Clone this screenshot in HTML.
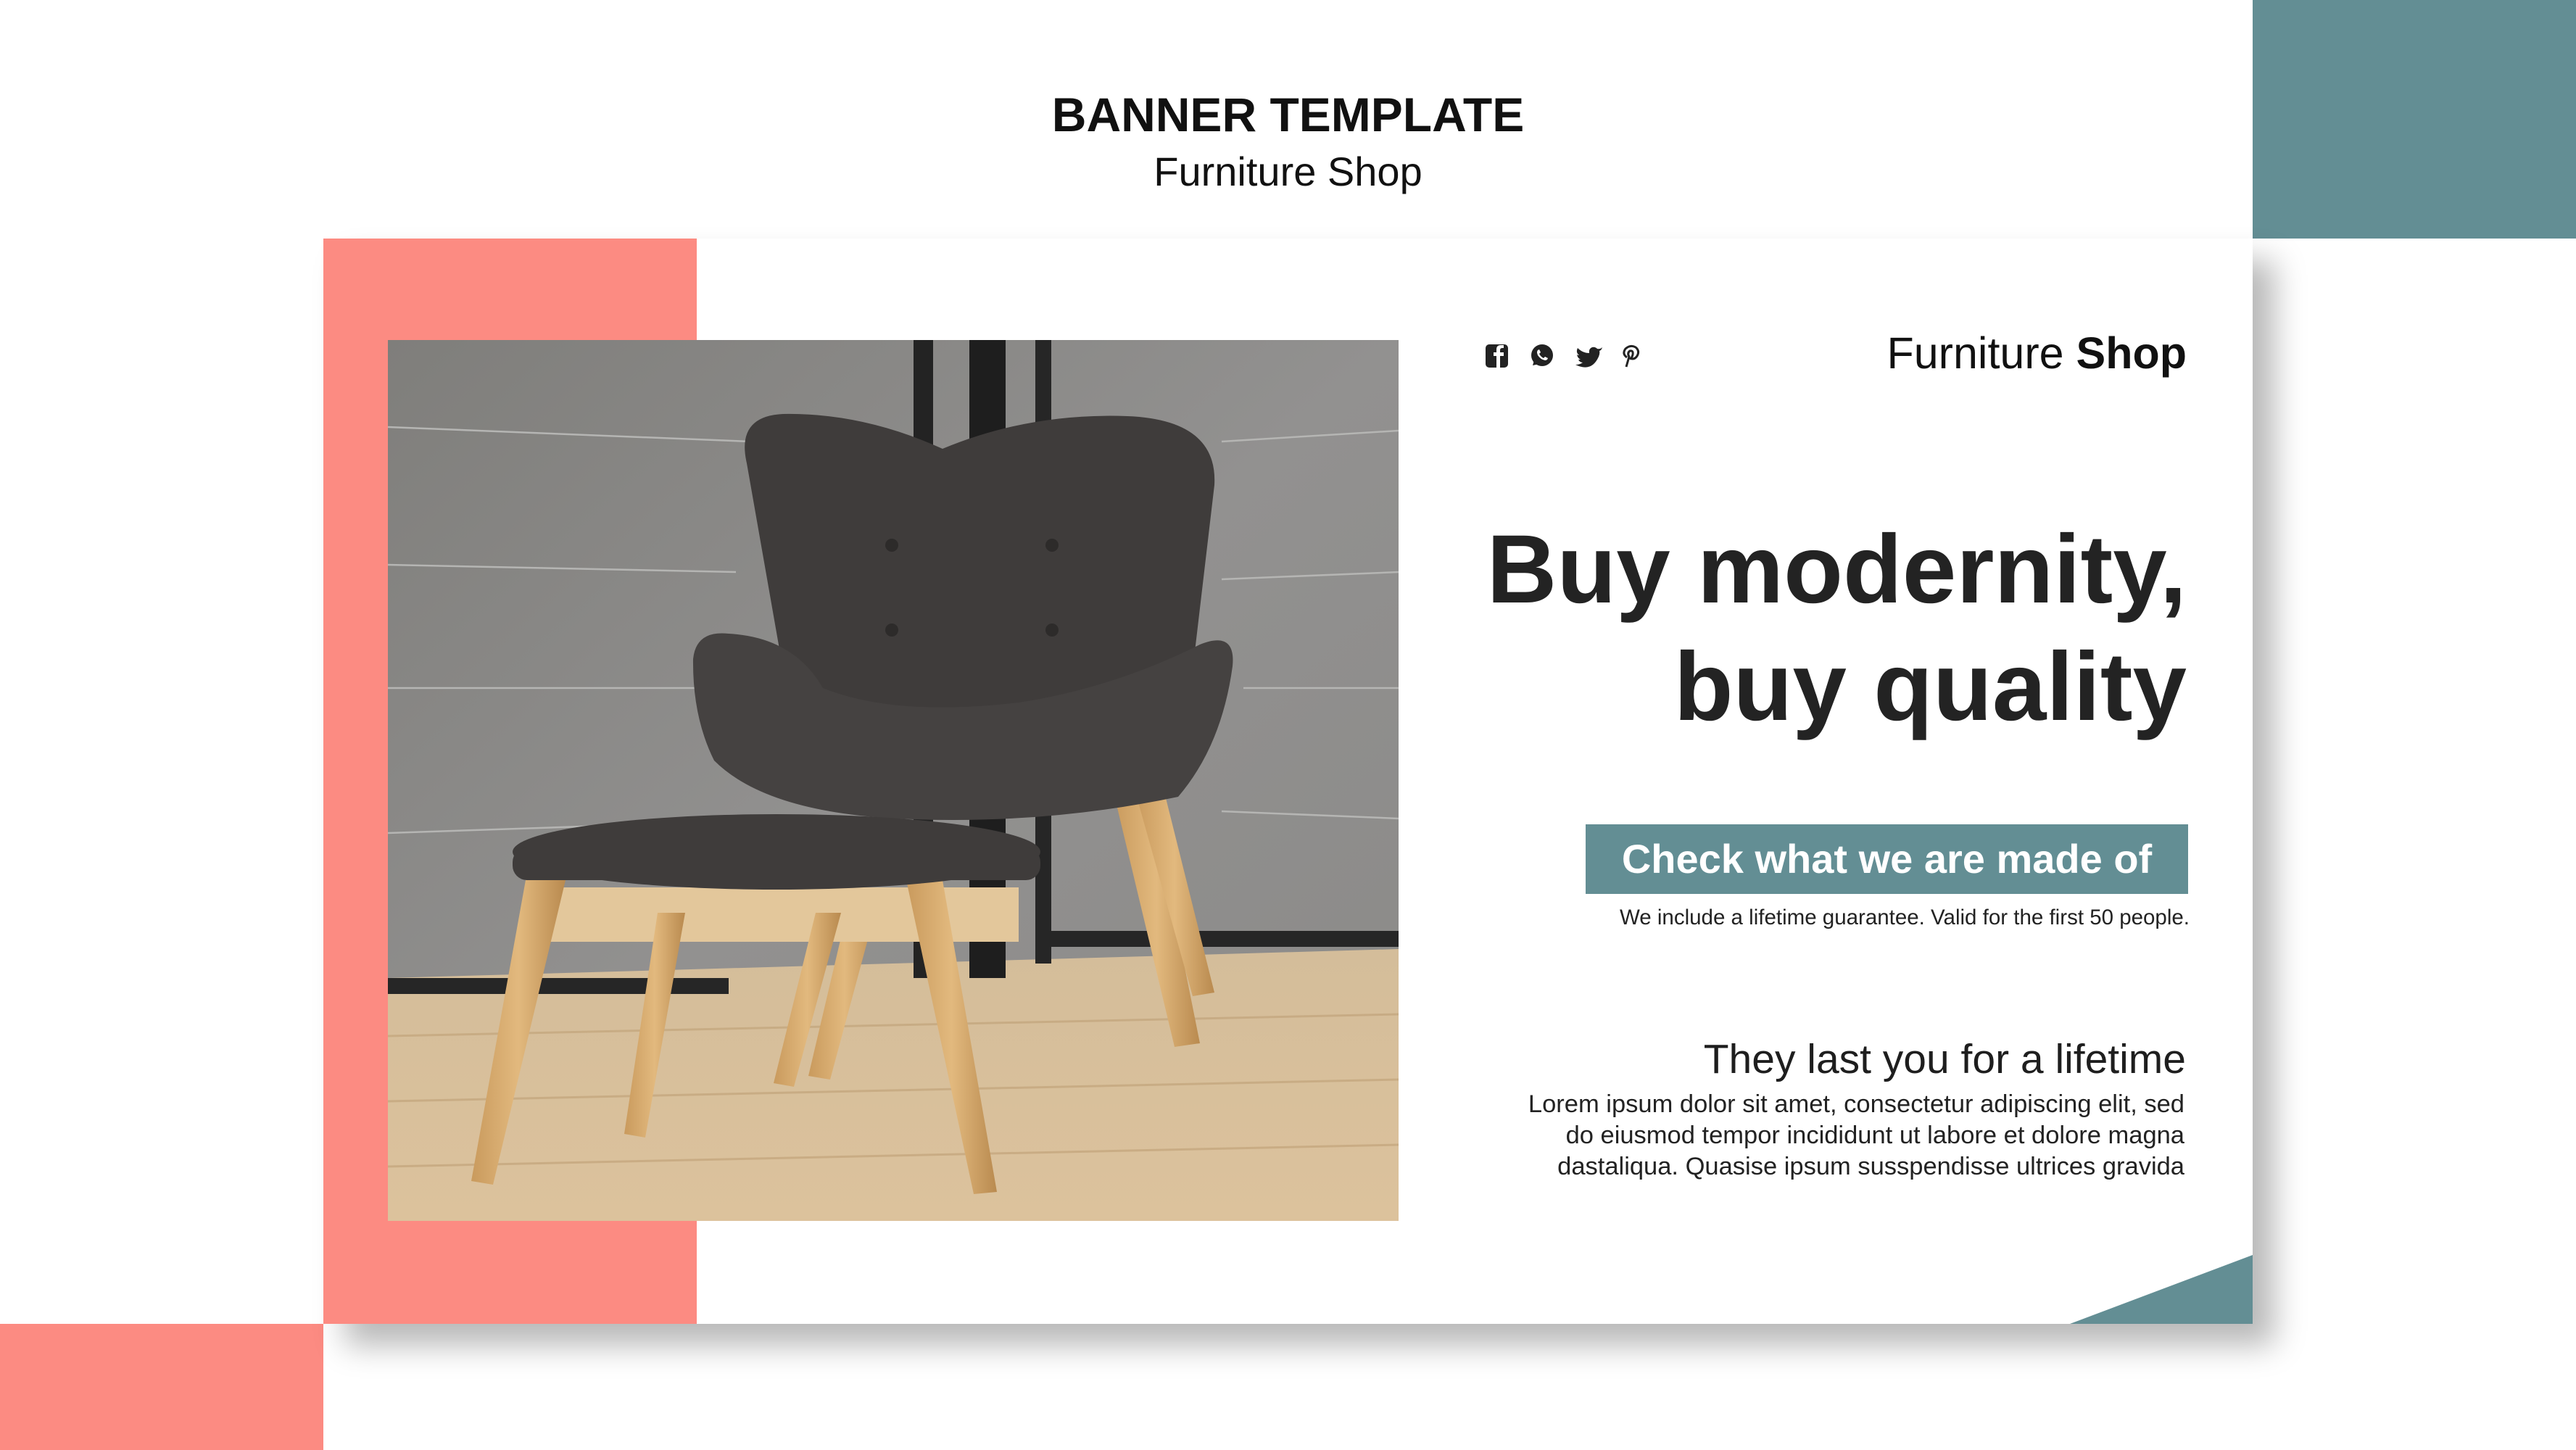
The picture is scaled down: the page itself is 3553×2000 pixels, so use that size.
<!DOCTYPE html>
<html><head><meta charset="utf-8"><style>
*{margin:0;padding:0;box-sizing:border-box}
body{width:3553px;height:2000px;background:#fff;position:relative;overflow:hidden;font-family:"Liberation Sans",sans-serif;color:#1e1e1e}
.abs{position:absolute}
.r{text-align:right;white-space:nowrap}
</style></head><body>
<div class="abs" style="left:3107px;top:0;width:446px;height:329px;background:#638e94"></div>
<div class="abs" style="left:0;top:1826px;width:446px;height:174px;background:#fc8b82"></div>
<div class="abs" style="left:0;top:120px;width:3553px;text-align:center;font-weight:bold;font-size:66px;letter-spacing:0px;color:#111">BANNER TEMPLATE</div>
<div class="abs" style="left:0;top:204px;width:3553px;text-align:center;font-size:56px;color:#111">Furniture Shop</div>
<div class="abs" style="left:446px;top:329px;width:2661px;height:1497px;background:#fff;box-shadow:30px 30px 40px rgba(0,0,0,.28)"></div>
<div class="abs" style="left:446px;top:329px;width:515px;height:1497px;background:#fc8b82"></div>
<svg class="abs" style="left:2855px;top:1731px" width="252" height="95"><polygon points="0,95 252,0 252,95" fill="#638e94"/></svg>

<svg class="abs" style="left:535px;top:469px" width="1394" height="1215" viewBox="0 0 1394 1215">
<defs>
<linearGradient id="w" x1="0" y1="0" x2="1" y2="1"><stop offset="0" stop-color="#7f7e7b"/><stop offset=".5" stop-color="#929190"/><stop offset="1" stop-color="#8a8987"/></linearGradient>
<linearGradient id="f" x1="0" y1="0" x2="0" y2="1"><stop offset="0" stop-color="#d4bd9a"/><stop offset="1" stop-color="#dcc29c"/></linearGradient>
<linearGradient id="leg" x1="0" y1="0" x2="1" y2="0"><stop offset="0" stop-color="#c99a5d"/><stop offset=".5" stop-color="#e2b97e"/><stop offset="1" stop-color="#b98a4f"/></linearGradient>
</defs>
<rect width="1394" height="1215" fill="url(#w)"/>
<g stroke="#b5b5b3" stroke-width="2.5"><line x1="0" y1="120" x2="500" y2="140"/><line x1="0" y1="310" x2="480" y2="320"/><line x1="0" y1="480" x2="470" y2="480"/><line x1="0" y1="680" x2="300" y2="670"/><line x1="1150" y1="140" x2="1394" y2="125"/><line x1="1150" y1="330" x2="1394" y2="320"/><line x1="1180" y1="480" x2="1394" y2="480"/><line x1="1150" y1="650" x2="1394" y2="660"/></g>
<polygon points="0,880 1394,840 1394,1215 0,1215" fill="url(#f)"/>
<g stroke="#c2a47b" stroke-width="3" opacity=".7"><line x1="0" y1="960" x2="1394" y2="930"/><line x1="0" y1="1050" x2="1394" y2="1020"/><line x1="0" y1="1140" x2="1394" y2="1110"/></g>
<rect x="725" y="0" width="27" height="880" fill="#232323"/>
<rect x="802" y="0" width="50" height="880" fill="#1e1e1e"/>
<rect x="893" y="0" width="22" height="860" fill="#262626"/>
<rect x="0" y="880" width="470" height="22" fill="#262626"/>
<rect x="893" y="815" width="501" height="22" fill="#262626"/>
<polygon points="1000,620 1050,620 1120,970 1085,975" fill="url(#leg)"/>
<polygon points="1030,620 1070,620 1140,900 1110,905" fill="url(#leg)"/>
<polygon points="640,760 680,760 610,1020 580,1015" fill="url(#leg)"/>
<path d="M495,170 Q480,105 545,102 Q655,100 765,150 Q885,100 1020,105 Q1145,110 1140,200 L1100,540 L560,540 Z" fill="#3f3c3b"/>
<path d="M421,440 Q425,400 470,405 Q560,410 600,480 Q700,520 870,500 Q1000,480 1120,420 Q1170,400 1165,450 Q1150,560 1090,630 Q900,670 700,660 Q520,650 450,580 Q420,520 421,440 Z" fill="#454241"/>
<g fill="#2d2b2a"><circle cx="695" cy="283" r="9"/><circle cx="916" cy="283" r="9"/><circle cx="695" cy="400" r="9"/><circle cx="916" cy="400" r="9"/></g>
<polygon points="200,755 870,755 870,830 200,830" fill="#e3c79b"/>
<polygon points="372,790 410,790 355,1100 326,1095" fill="url(#leg)"/>
<polygon points="590,790 625,790 560,1030 532,1025" fill="url(#leg)"/>
<polygon points="190,745 245,745 145,1165 115,1160" fill="url(#leg)"/>
<polygon points="715,745 765,745 840,1175 808,1178" fill="url(#leg)"/>
<ellipse cx="536" cy="706" rx="364" ry="52" fill="#3f3c3b"/>
<rect x="172" y="700" width="728" height="45" rx="20" fill="#3f3c3b"/>
</svg>

<svg class="abs" style="left:2046px;top:472px" width="230" height="36" viewBox="0 0 230 36">
<rect x="3" y="3" width="31" height="32" rx="5" fill="#222"/><path d="M23,35 V19 H28 V14 H23 V11 Q23,8 26,8 H28 V4 H24 Q18,4 18,10 V14 H14 V19 H18 V35 Z" fill="#fff"/>
<circle cx="81" cy="18" r="15" fill="#222"/><path d="M68,32 L70,25 L77,30 Z" fill="#222"/><path d="M75,11 Q73,13 75,18 Q79,24 85,25 Q88,25 89,22 L85,20 L83,22 Q79,20 77,16 L79,14 L77,10 Z" fill="#fff"/>
<g transform="translate(18,0)"><path d="M146,7 Q143,10 139,9 Q136,6 132,7 Q127,9 128,15 Q119,15 112,8 Q109,14 114,18 Q112,18 111,17 Q112,22 116,24 L113,24 Q115,28 119,28 Q115,31 109,31 Q131,42 141,20 Q143,15 142,12 Q145,11 146,7Z" fill="#222"/></g>
<path d="M197,34 L201,20 Q198,15 202,12 Q207,11 206,17 Q205,22 202,23 M198,21 Q191,16 196,9 Q203,3 210,7 Q216,12 212,19 Q208,25 202,22" fill="none" stroke="#222" stroke-width="3"/>
</svg>
<div class="abs r" style="right:537px;top:452px;font-size:61px;color:#111">Furniture <b>Shop</b></div>
<div class="abs r" style="right:537px;top:705px;font-size:134px;font-weight:bold;line-height:162px;color:#232323">Buy modernity,<br>buy quality</div>
<div class="abs" style="left:2187px;top:1137px;width:831px;height:96px;background:#638e94;color:#fff;font-weight:bold;font-size:56px;line-height:96px;text-align:center">Check what we are made of</div>
<div class="abs r" style="right:533px;top:1249px;font-size:29.5px;color:#222">We include a lifetime guarantee. Valid for the first 50 people.</div>
<div class="abs r" style="right:538px;top:1428px;font-size:57px;color:#1e1e1e">They last you for a lifetime</div>
<div class="abs r" style="right:540px;top:1502px;font-size:34.5px;line-height:43px;color:#222">Lorem ipsum dolor sit amet, consectetur adipiscing elit, sed<br>do eiusmod tempor incididunt ut labore et dolore magna<br>dastaliqua. Quasise ipsum susspendisse ultrices gravida</div>
</body></html>
